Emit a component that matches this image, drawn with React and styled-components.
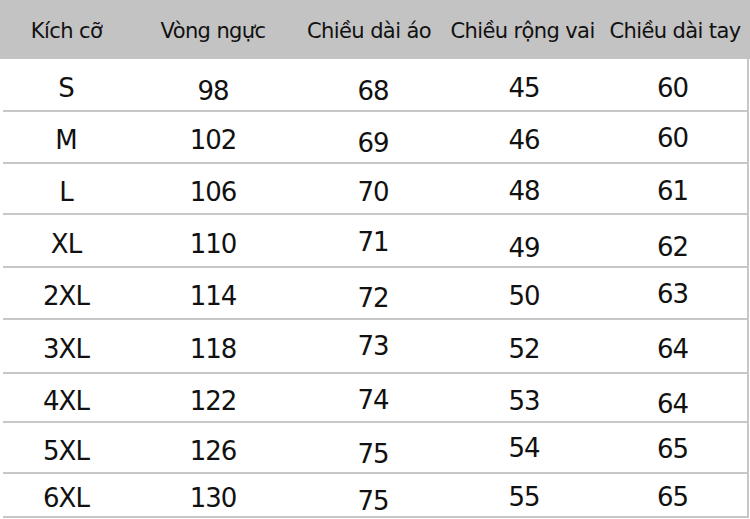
import React from 'react';
import styled, { createGlobalStyle } from 'styled-components';

const columns = ['Kích cỡ', 'Vòng ngực', 'Chiều dài áo', 'Chiều rộng vai', 'Chiều dài tay'];

const rows = [
  { h: 53, cells: ['S', '98', '68', '45', '60'], dy: [0, 3, 3, 0, 0] },
  { h: 52, cells: ['M', '102', '69', '46', '60'], dy: [0, 0, 3, 0, -2] },
  { h: 51, cells: ['L', '106', '70', '48', '61'], dy: [0, 0, 0, -1, -1] },
  { h: 53, cells: ['XL', '110', '71', '49', '62'], dy: [0, 0, -2, 4, 3] },
  { h: 52, cells: ['2XL', '114', '72', '50', '63'], dy: [0, 0, 2, 0, -2] },
  { h: 54, cells: ['3XL', '118', '73', '52', '64'], dy: [0, 0, -3, 0, 0] },
  { h: 49, cells: ['4XL', '122', '74', '53', '64'], dy: [0, 0, -1, 0, 3] },
  { h: 51, cells: ['5XL', '126', '75', '54', '65'], dy: [0, 0, 3, -3, -2] },
  { h: 44, cells: ['6XL', '130', '75', '55', '65'], dy: [0, 0, 3, -1, -1] },
];

function App() {
  return (
    <>
      <GlobalStyle />
      <Table>
        <HeaderRow>
          {columns.map((c) => (
            <HeadCell key={c}>{c}</HeadCell>
          ))}
        </HeaderRow>
        <Body>
          {rows.map((r) => (
            <Row key={r.cells[0]} $h={r.h}>
              {r.cells.map((v, i) => (
                <Cell key={i} $dy={r.dy[i]}>{v}</Cell>
              ))}
            </Row>
          ))}
        </Body>
      </Table>
    </>
  );
}

export default App;

const GlobalStyle = createGlobalStyle`
  body {
    margin : 0;
    background : #ffffff;
  }
`

const Table = styled.div`
  width : 750px;
  height : 519px;
  overflow : hidden;
  font-family : "DejaVu Sans", "Liberation Sans", sans-serif;
  color : #111111;
`

const HeaderRow = styled.div`
  display : grid;
  grid-template-columns : 133px 160px 152px 155px 150px;
  height : 59px;
  background : #c3c3c3;
  align-items : center;
`

const HeadCell = styled.div`
  text-align : center;
  font-size : 21px;
  padding-top : 3px;
  white-space : nowrap;
  letter-spacing : -0.6px;
`

const Body = styled.div`
  width : 746px;
  margin-left : 3px;
  border-right : 2px solid #c6c6c6;
  box-sizing : border-box;
`

const Row = styled.div`
  display : grid;
  grid-template-columns : 126px 168px 152px 150px 147px;
  height : ${(p) => p.$h}px;
  align-items : center;
  padding-top : 6px;
  box-sizing : border-box;
  border-bottom : 2px solid #c8c8c8;
`

const Cell = styled.div`
  text-align : center;
  font-size : 26px;
  letter-spacing : -1px;
  transform : translateY(${(p) => p.$dy}px);
`
